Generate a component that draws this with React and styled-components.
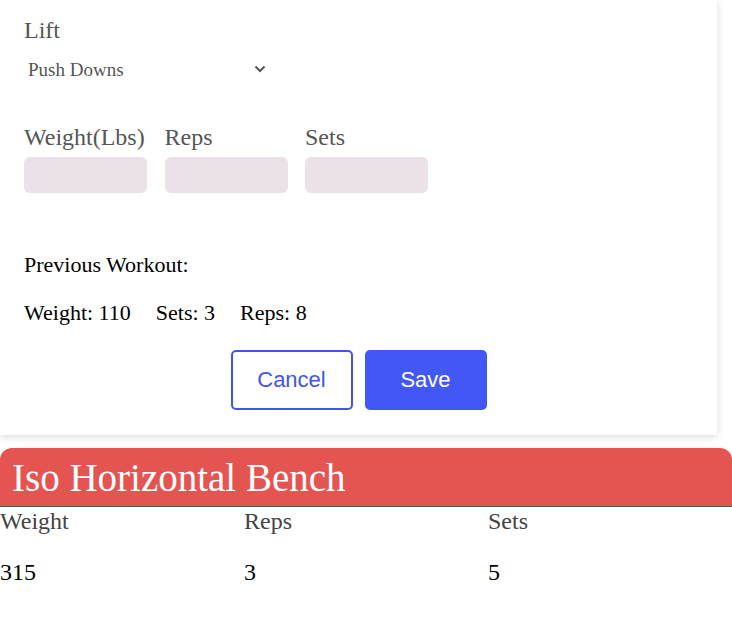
import React from 'react';
import styled, { createGlobalStyle } from 'styled-components';

const GlobalStyle = createGlobalStyle`
    body {
        margin: 0;
        background: #ffffff;
        font-family: "Liberation Serif", "Times New Roman", serif;
    }
`;

const Page = styled.div`
    width: 732px;
    display: flex;
    flex-direction: column;
    gap: 13px;
`;

const FormCard = styled.div`
    width: 717px;
    box-sizing: border-box;
    padding: 16px 24px 25px;
    background: #fff;
    box-shadow: 0 2px 8px rgba(0, 0, 0, 0.14);
`;

const FieldLabel = styled.label`
    display: block;
    font-size: 24px;
    line-height: 28px;
    color: #555;
    white-space: nowrap;
`;

const SelectWrap = styled.div`
    display: flex;
    align-items: center;
    width: 242px;
    margin-top: 12px;
    padding-left: 4px;
    box-sizing: border-box;
    height: 26px;
`;

const Select = styled.select`
    flex: 1;
    appearance: none;
    border: none;
    background: transparent;
    font-family: inherit;
    font-size: 19px;
    color: #555;
    padding: 0;
    outline: none;
`;

const FieldsRow = styled.div`
    display: flex;
    gap: 17.5px;
    margin-top: 41px;
`;

const Field = styled.div`
    display: flex;
    flex-direction: column;
    gap: 6px;
    width: 123px;
`;

const Input = styled.input`
    width: 123px;
    height: 36px;
    box-sizing: border-box;
    border: none;
    border-radius: 6px;
    background: #ebe1e8;
`;

const Previous = styled.div`
    margin-top: 60px;
    font-size: 22px;
    line-height: 24px;
    color: #000;
`;

const StatsRow = styled.div`
    display: flex;
    gap: 25px;
    margin-top: 24px;
    font-size: 22px;
    line-height: 24px;
    color: #000;
`;

const Buttons = styled.div`
    display: flex;
    justify-content: center;
    gap: 12px;
    margin-top: 25px;
`;

const Button = styled.button`
    width: 122px;
    height: 60px;
    box-sizing: border-box;
    border-radius: 5px;
    font-family: "Liberation Sans", Arial, sans-serif;
    font-size: 22px;
    border: 2px solid ${props => (props.primary ? '#4157f6' : '#4253ee')};
    background: ${props => (props.primary ? '#4157f6' : '#fff')};
    color: ${props => (props.primary ? '#fff' : '#4253ee')};
`;

const LiftCard = styled.div`
    width: 732px;
    background: #fff;
    border-radius: 12px 12px 0 0;
    box-shadow: 0 2px 6px rgba(0, 0, 0, 0.12);
    padding-bottom: 23px;
`;

const LiftHeader = styled.div`
    height: 59px;
    box-sizing: border-box;
    background: #e45552;
    border-radius: 12px 12px 0 0;
    border-bottom: 1px solid #555;
    padding-left: 12px;
    display: flex;
    align-items: center;
    font-size: 39px;
    color: #fff;
`;

const Grid = styled.div`
    display: grid;
    grid-template-columns: repeat(3, 1fr);
    row-gap: 23px;
    font-size: 24px;
    line-height: 28px;
`;

const Cell = styled.div`
    color: ${props => (props.head ? '#444' : '#000')};
`;

const Chevron = () => (
    <svg width="12" height="8" viewBox="0 0 12 8">
        <path d="M1.5 1.5 L6 6 L10.5 1.5" fill="none" stroke="#555" strokeWidth="2" />
    </svg>
);

const App = () => (
    <Page>
        <GlobalStyle />
        <FormCard>
            <FieldLabel>Lift</FieldLabel>
            <SelectWrap>
                <Select defaultValue="push">
                    <option value="push">Push Downs</option>
                </Select>
                <Chevron />
            </SelectWrap>
            <FieldsRow>
                <Field>
                    <FieldLabel>Weight(Lbs)</FieldLabel>
                    <Input />
                </Field>
                <Field>
                    <FieldLabel>Reps</FieldLabel>
                    <Input />
                </Field>
                <Field>
                    <FieldLabel>Sets</FieldLabel>
                    <Input />
                </Field>
            </FieldsRow>
            <Previous>Previous Workout:</Previous>
            <StatsRow>
                <span>Weight: 110</span>
                <span>Sets: 3</span>
                <span>Reps: 8</span>
            </StatsRow>
            <Buttons>
                <Button>Cancel</Button>
                <Button primary>Save</Button>
            </Buttons>
        </FormCard>
        <LiftCard>
            <LiftHeader>Iso Horizontal Bench</LiftHeader>
            <Grid>
                <Cell head>Weight</Cell>
                <Cell head>Reps</Cell>
                <Cell head>Sets</Cell>
                <Cell>315</Cell>
                <Cell>3</Cell>
                <Cell>5</Cell>
            </Grid>
        </LiftCard>
    </Page>
);

export default App;
